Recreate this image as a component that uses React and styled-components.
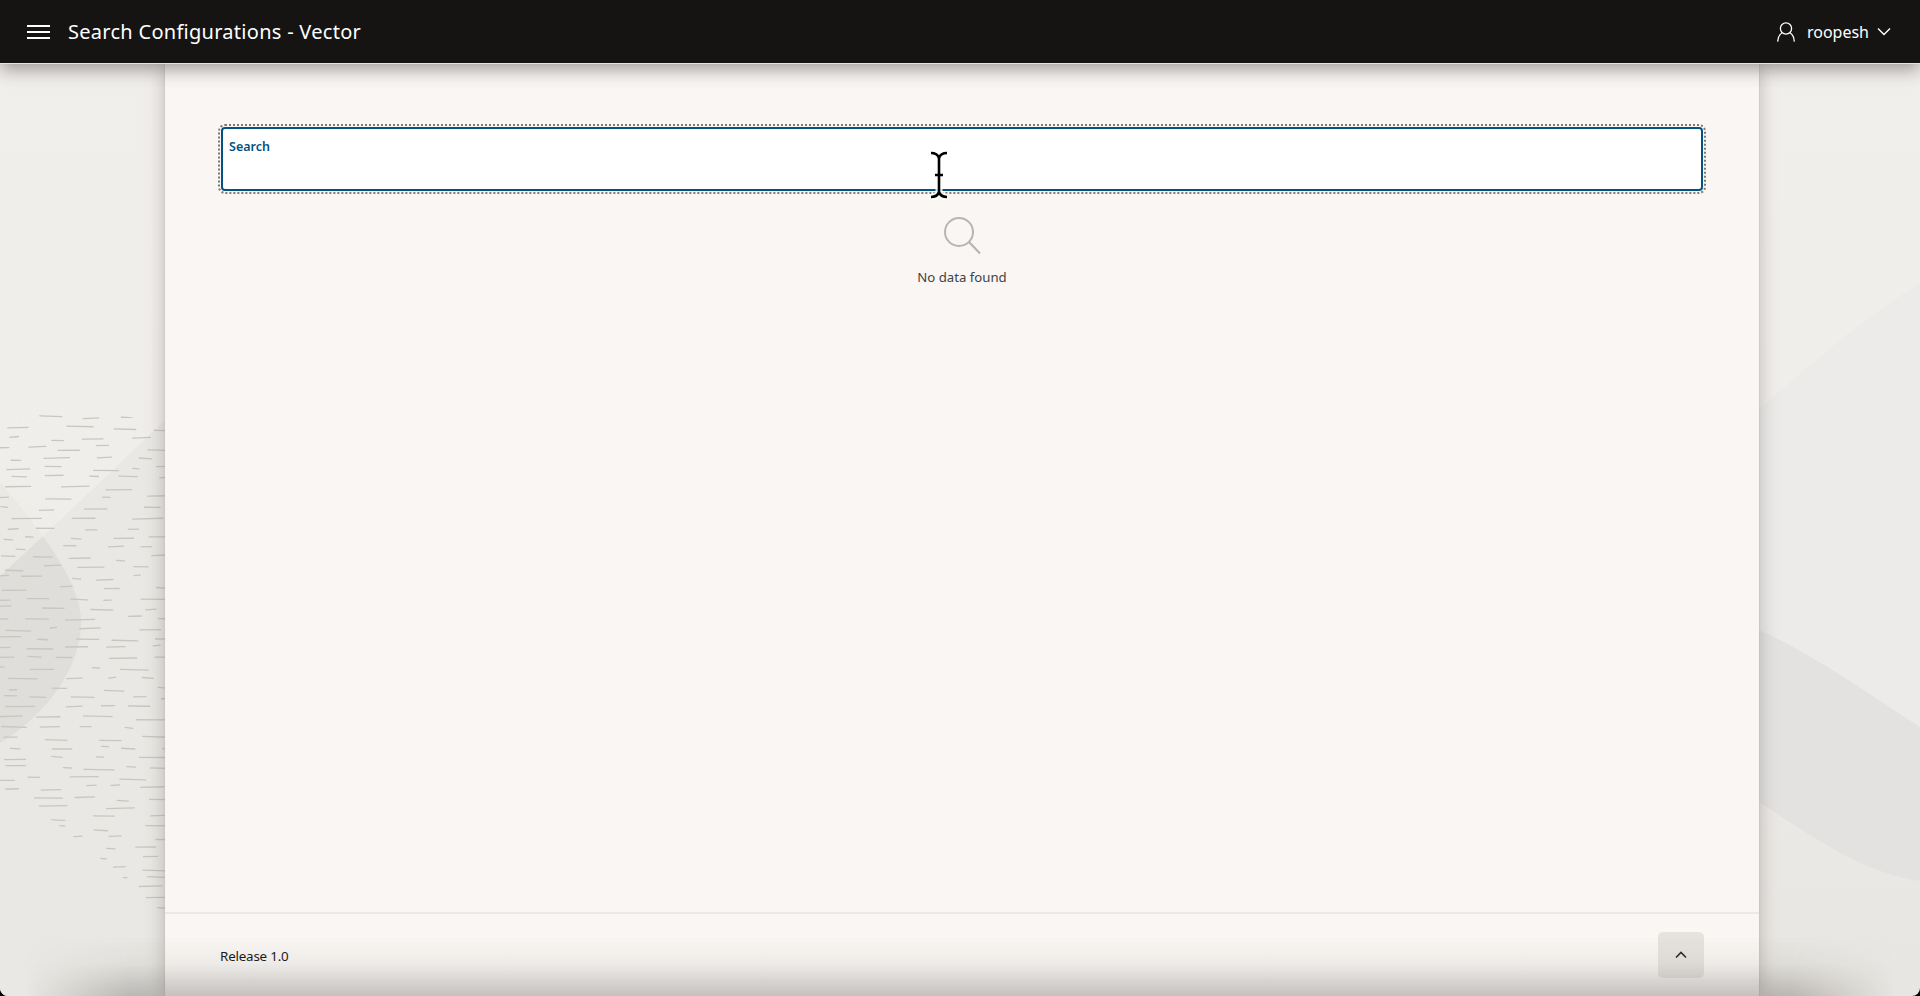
import React from 'react';
import styled, { createGlobalStyle } from 'styled-components';

const Global = createGlobalStyle`
  html, body { margin: 0; padding: 0; height: 100%; background: #000; }
  #root { height: 100%; }
  * { box-sizing: border-box; }
`;

const Page = styled.div`
  position: relative;
  height: 996px;
  overflow: hidden;
  display: flex;
  flex-direction: column;
  font-family: "Noto Sans", "Open Sans", sans-serif;
  background: linear-gradient(#f1efec 0%, #f0eeeb 50%, #e8e6e2 100%);
  border-radius: 0 0 8px 8px;
`;

const Backdrop = styled.svg`
  position: absolute;
  inset: 0;
  width: 100%;
  height: 100%;
`;

const Header = styled.header`
  position: relative;
  z-index: 3;
  flex: 0 0 64px;
  display: flex;
  align-items: center;
  padding: 0 29px 0 27px;
  background: #161313;
  color: #fff;
  border-bottom: 1px solid #e6e4e1;
  box-shadow: 0 6px 16px rgba(60, 56, 50, 0.45);
`;

const MenuIcon = styled.svg`
  width: 23px;
  height: 16px;
  margin-right: 18px;
`;

const Title = styled.h1`
  flex: 1;
  margin: 0;
  font-size: 20px;
  font-weight: 400;
  line-height: 26px;
  letter-spacing: 0.28px;
`;

const UserMenu = styled.div`
  display: flex;
  align-items: center;
  font-size: 16px;
  line-height: 20px;
`;

const UserIcon = styled.svg`
  width: 18px;
  height: 20px;
  margin-right: 12px;
`;

const Caret = styled.svg`
  width: 14px;
  height: 9px;
  margin-left: 8px;
`;

const Card = styled.main`
  position: relative;
  z-index: 1;
  flex: 1;
  width: 1594px;
  margin-left: 165px;
  display: flex;
  flex-direction: column;
  background: #f9f6f3;
  box-shadow: 0 0 1px #a9a7a3, 0 0 18px rgba(90, 86, 80, 0.36);
`;

const Content = styled.section`
  flex: 1;
  padding: 60px 53px 0;
`;

const SearchFrame = styled.div`
  padding: 1px;
  border: 2px dotted #7c7a76;
  border-radius: 7px;
`;

const SearchField = styled.label`
  display: block;
  height: 64px;
  padding: 9px 6px;
  background: #fff;
  border: 2px solid #04527f;
  border-radius: 4px;
  color: #04527f;
  font-size: 12.5px;
  font-weight: 600;
  line-height: 17px;
`;

const Empty = styled.div`
  display: flex;
  flex-direction: column;
  align-items: center;
  padding-top: 23px;
  color: #45423f;
  font-size: 13.2px;
  line-height: 18px;
`;

const EmptyIcon = styled.svg`
  width: 40px;
  height: 40px;
  margin-bottom: 11px;
`;

const Footer = styled.footer`
  flex: 0 0 84px;
  display: flex;
  align-items: flex-start;
  justify-content: space-between;
  padding: 18px 55px 0;
  border-top: 2px solid #ebe9e6;
  color: #161513;
  font-size: 13.4px;
`;

const Release = styled.span`
  margin-top: 14px;
  line-height: 20px;
  letter-spacing: -0.2px;
`;

const TopButton = styled.button`
  width: 46px;
  height: 46px;
  padding: 0;
  display: flex;
  align-items: center;
  justify-content: center;
  border: 0;
  border-radius: 5px;
  background: #e6e3df;
`;

const CaretUp = styled.svg`
  width: 12px;
  height: 8px;
`;

const BottomShade = styled.div`
  position: absolute;
  z-index: 2;
  left: 0;
  right: 0;
  bottom: 0;
  height: 60px;
  pointer-events: none;
  background: linear-gradient(rgba(120, 116, 110, 0) 0%, rgba(120, 116, 110, 0.08) 45%, rgba(95, 92, 88, 0.34) 100%);
  -webkit-mask-image: linear-gradient(90deg, transparent 25px, #000 130px, #000 1790px, transparent 1895px);
`;

const CursorMark = styled.svg`
  position: absolute;
  z-index: 4;
  left: 925px;
  top: 150px;
  width: 28px;
  height: 50px;
`;

const DashGroup = styled.g`
  filter: blur(0.45px);
`;

function dashes() {
  let s = 29;
  const r = () => { s = (s * 16807) % 2147483647; return s / 2147483647; };
  const out = [];
  for (let y = 408; y < 915; y += 10) {
    let x = -10 + r() * 24;
    while (x < 166) {
      const len = 6 + r() * 24;
      const tilt = (r() - 0.5) * 1.8;
      out.push({ x, y: y + (r() - 0.5) * 5, len, tilt });
      x += len + 12 + r() * 28;
    }
  }
  return out;
}

const marks = dashes();
const DASH_REGION = 'M0 432 C30 404 100 408 165 425 L165 915 C105 860 50 815 0 786 Z';
const OVERLAP = 'M0 482 C40 530 85 585 81 628 C77 680 35 722 0 743 Z';
const BAND = 'M165 420 C105 478 50 530 0 576 L0 996 L165 996 Z';

function Scenery() {
  return (
    <Backdrop viewBox="0 0 1920 996" aria-hidden="true">
      <defs>
        <clipPath id="dash-region"><path d={DASH_REGION} /></clipPath>
        <clipPath id="band-clip"><path d={BAND} /></clipPath>
      </defs>
      <path d={BAND} fill="#e9e8e4" />
      <path d={OVERLAP} fill="#eae9e4" />
      <path d={OVERLAP} fill="#dfdedb" clipPath="url(#band-clip)" />
      <g clipPath="url(#dash-region)">
        <DashGroup stroke="#c9c6c1" strokeWidth="1.3" strokeLinecap="round">
          {marks.map((m, i) => (
            <line key={i} x1={m.x} y1={m.y} x2={m.x + m.len} y2={m.y + m.tilt} />
          ))}
        </DashGroup>
      </g>
      <path d="M1759 409 C1810 365 1860 320 1920 283 L1920 727 C1870 695 1815 655 1759 630 Z" fill="#ecebe9" />
      <path d="M1759 630 C1815 655 1870 695 1920 727 L1920 881 C1860 872 1810 835 1759 802 Z" fill="#e4e2e1" />
    </Backdrop>
  );
}

export default function App() {
  return (
    <>
      <Global />
      <Page>
        <Scenery />
        <Header>
          <MenuIcon viewBox="0 0 23 16" aria-hidden="true">
            <path d="M0 2h23M0 8h23M0 14h23" stroke="#fff" strokeWidth="2" />
          </MenuIcon>
          <Title>Search Configurations - Vector</Title>
          <UserMenu>
            <UserIcon viewBox="0 0 18 20" fill="none" stroke="#fff" strokeWidth="1.3" aria-hidden="true">
              <circle cx="9" cy="6.5" r="5.6" />
              <path d="M5.2 10.8 C2.4 12.4 0.9 15.2 0.7 19.6 M12.8 10.8 C15.6 12.4 17.1 15.2 17.3 19.6" />
            </UserIcon>
            roopesh
            <Caret viewBox="0 0 14 9" fill="none" stroke="#fff" strokeWidth="1.4" aria-hidden="true">
              <path d="M1 1.5 L7 7.5 L13 1.5" />
            </Caret>
          </UserMenu>
        </Header>
        <Card>
          <Content>
            <SearchFrame>
              <SearchField>Search</SearchField>
            </SearchFrame>
            <Empty>
              <EmptyIcon viewBox="0 0 40 40" fill="none" stroke="#b7b5b2" strokeWidth="2" aria-hidden="true">
                <circle cx="17" cy="15" r="14" />
                <path d="M27 25 L38 36.5" strokeWidth="2.2" />
              </EmptyIcon>
              No data found
            </Empty>
          </Content>
          <Footer>
            <Release>Release 1.0</Release>
            <TopButton aria-label="Back to top">
              <CaretUp viewBox="0 0 12 8" fill="none" stroke="#2b2926" strokeWidth="1.6" aria-hidden="true">
                <path d="M1 6.5 L6 1.5 L11 6.5" />
              </CaretUp>
            </TopButton>
          </Footer>
        </Card>
        <BottomShade />
        <CursorMark viewBox="0 0 28 50" aria-hidden="true">
          <path d="M6 3 C10 3 13 5 14 8 C15 5 18 3 22 3 M14 8 V42 M6 47 C10 47 13 45 14 42 C15 45 18 47 22 47 M10 25 H18" fill="none" stroke="#fff" strokeWidth="7" opacity="0.85" />
          <path d="M6 3 C10 3 13 5 14 8 C15 5 18 3 22 3 M14 8 V42 M6 47 C10 47 13 45 14 42 C15 45 18 47 22 47 M10 25 H18" fill="none" stroke="#000" strokeWidth="2.6" />
        </CursorMark>
      </Page>
    </>
  );
}
